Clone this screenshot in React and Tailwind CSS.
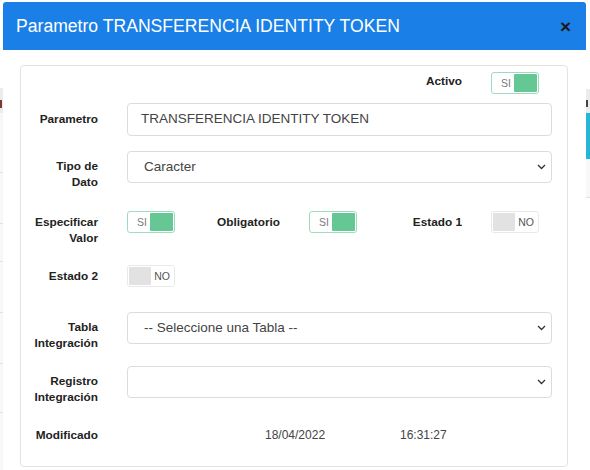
import React from 'react';

const font = { fontFamily: '"Liberation Sans", Arial, sans-serif' };

function Toggle({ on }) {
  if (on) {
    return (
      <div className="flex h-[22px] w-[48px] shrink-0 items-center rounded-[3px] border border-[#9fdcbe] bg-white p-px">
        <span className="flex-1 pl-[8px] text-[10.5px] leading-none text-[#7a7a7a]">SI</span>
        <span className="h-full w-[23px] rounded-[1px] bg-[#65c794]" />
      </div>
    );
  }
  return (
    <div className="flex h-[22px] w-[48px] shrink-0 items-center rounded-[3px] border border-[#e9e9e9] bg-white p-px">
      <span className="h-full w-[22px] rounded-[1px] bg-[#e2e2e2]" />
      <span className="flex-1 text-center text-[10.5px] leading-none text-[#555]">NO</span>
    </div>
  );
}

function Label({ children, pt }) {
  return (
    <div className={`w-[64px] shrink-0 text-right text-[11.8px] font-bold leading-[16px] text-[#222] ${pt}`}>
      {children}
    </div>
  );
}

function Chevron() {
  return (
    <svg width="9" height="6" viewBox="0 0 9 6" className="shrink-0">
      <path d="M1 1l3.5 3.5L8 1" fill="none" stroke="#333" strokeWidth="1.3" />
    </svg>
  );
}

function Select({ value }) {
  return (
    <div className="flex h-[32px] flex-1 items-center rounded-[4px] border border-[#dcdcdc] bg-white pl-[16px] pr-[5px]">
      <span className="flex-1 text-[13.5px] text-[#444]">{value}</span>
      <Chevron />
    </div>
  );
}

function ToggleCell({ label, on, pt = 'pt-[3px]' }) {
  return (
    <div className="flex w-[182px] shrink-0 items-start gap-[29px]">
      <Label pt={pt}>{label}</Label>
      <Toggle on={on} />
    </div>
  );
}

function LeftStrip() {
  const lines = [172, 223, 261, 312, 363, 412];
  return (
    <div className="relative h-[470px] w-[3px] shrink-0 bg-white">
      <div className="absolute left-0 top-[88px] h-[25px] w-[3px] bg-[#ececec]">
        <div className="mt-[12px] h-[8px] w-[2px] bg-[#7a3b2e]" />
      </div>
      <div className="absolute left-0 top-[113px] h-[357px] w-[3px] bg-[#f8f8f8]" />
      {lines.map((y) => (
        <div key={y} className="absolute left-0 h-px w-[3px] bg-[#e2e2e2]" style={{ top: y }} />
      ))}
    </div>
  );
}

function RightStrip() {
  return (
    <div className="flex h-[470px] w-[4px] shrink-0 flex-col bg-white">
      <div className="mt-[89px] h-[24px] w-full bg-[#ececec] pt-[11px]">
        <div className="h-[7px] w-[2px] bg-[#444]" />
      </div>
      <div className="h-[46px] w-full bg-[#2bb4d6]" />
      <div className="h-[39px] w-full border-b border-[#e2e2e2] bg-[#f8f8f8]" />
    </div>
  );
}

export default function App() {
  return (
    <div className="flex h-[470px] w-[590px] overflow-hidden bg-white" style={font}>
      <LeftStrip />
      <div className="flex w-[583px] shrink-0 flex-col pt-[2px]">
        <div className="flex h-[48px] items-center justify-between rounded-t-[3px] bg-[#1a7fe6] pl-[13px] pr-[15px]">
          <span className="text-[17.6px] text-white">Parametro TRANSFERENCIA IDENTITY TOKEN</span>
          <span className="text-[19px] font-bold leading-none text-[#1b1b1b]">×</span>
        </div>
        <div className="flex-1 bg-white pl-[17px] pr-[18px] pt-[15px]">
          <div className="rounded-[4px] border border-[#e3e3e3] pb-[23px] pl-[13px] pr-[15px] pt-[6px]">
            <div className="flex h-[22px]">
              <div className="w-[364px] shrink-0" />
              <ToggleCell label="Activo" on pt="pt-[1px]" />
            </div>

            <div className="mt-[9px] flex h-[33px] items-start gap-[29px]">
              <Label pt="pt-[8px]">Parametro</Label>
              <div className="flex h-[33px] flex-1 items-center rounded-[4px] border border-[#dcdcdc] pl-[13px] text-[13.5px] text-[#444]">
                TRANSFERENCIA IDENTITY TOKEN
              </div>
            </div>

            <div className="mt-[15px] flex h-[32px] items-start gap-[29px]">
              <Label pt="pt-[7px]">Tipo de Dato</Label>
              <Select value="Caracter" />
            </div>

            <div className="mt-[28px] flex h-[22px]">
              <ToggleCell label="Especificar Valor" on />
              <ToggleCell label="Obligatorio" on />
              <ToggleCell label="Estado 1" />
            </div>

            <div className="mt-[32px] flex h-[22px]">
              <ToggleCell label="Estado 2" />
            </div>

            <div className="mt-[25px] flex h-[32px] items-start gap-[29px]">
              <Label pt="pt-[7px]">Tabla Integración</Label>
              <Select value="-- Seleccione una Tabla --" />
            </div>

            <div className="mt-[22px] flex h-[32px] items-start gap-[29px]">
              <Label pt="pt-[7px]">Registro Integración</Label>
              <Select value="" />
            </div>

            <div className="mt-[29px] flex h-[16px] items-center">
              <Label pt="">Modificado</Label>
              <span className="ml-[167px] w-[135px] text-[12px] text-[#444]">18/04/2022</span>
              <span className="text-[12px] text-[#444]">16:31:27</span>
            </div>
          </div>
        </div>
      </div>
      <RightStrip />
    </div>
  );
}
